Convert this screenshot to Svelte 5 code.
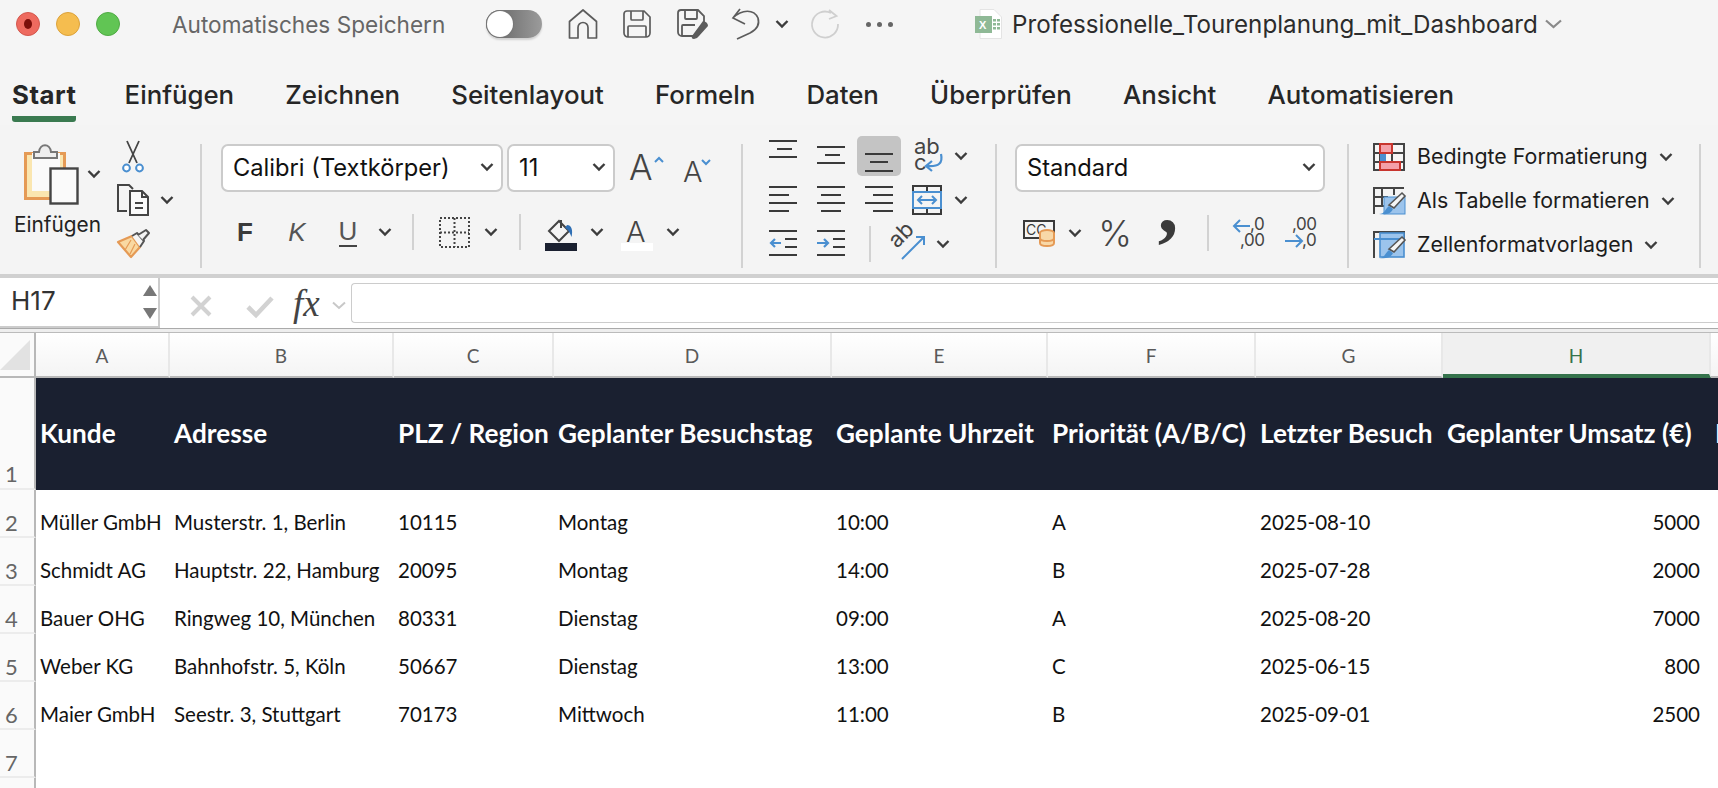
<script>
  const letters = ['A','B','C','D','E','F','G','H','I'];
  const head = ['Kunde','Adresse','PLZ / Region','Geplanter Besuchstag','Geplante Uhrzeit','Priorität (A/B/C)','Letzter Besuch','Geplanter Umsatz (€)','Route'];
  const rows = [
    ['Müller GmbH','Musterstr. 1, Berlin','10115','Montag','10:00','A','2025-08-10','5000'],
    ['Schmidt AG','Hauptstr. 22, Hamburg','20095','Montag','14:00','B','2025-07-28','2000'],
    ['Bauer OHG','Ringweg 10, München','80331','Dienstag','09:00','A','2025-08-20','7000'],
    ['Weber KG','Bahnhofstr. 5, Köln','50667','Dienstag','13:00','C','2025-06-15','800'],
    ['Maier GmbH','Seestr. 3, Stuttgart','70173','Mittwoch','11:00','B','2025-09-01','2500']
  ];
  const tabs = ['Einfügen','Zeichnen','Seitenlayout','Formeln','Daten','Überprüfen','Ansicht','Automatisieren'];
  const vTop = [[0,28,3],[8,23,11],[0,28,19]];
  const vMid = [[0,28,9],[8,23,17],[0,28,25]];
  const vBot = [[0,28,16],[5,23,24],[0,28,33]];
  const hLeft = [[0,28,5],[0,20,13],[0,28,21],[0,20,29]];
  const hCenter = [[0,28,5],[4,24,13],[0,28,21],[4,24,29]];
  const hRight = [[0,28,5],[8,28,13],[0,28,21],[8,28,29]];
</script>

{#snippet chev()}
  <svg class="chev" width="14" height="10" viewBox="0 0 14 10"><path d="M1.5 2 L7 7.5 L12.5 2" fill="none" stroke="#3c3c3c" stroke-width="2.4"/></svg>
{/snippet}

{#snippet lines(items)}
  <svg width="28" height="36" viewBox="0 0 28 36">
    {#each items as l}
      <line x1={l[0]} x2={l[1]} y1={l[2]} y2={l[2]} stroke="#3a3a3a" stroke-width="2"/>
    {/each}
  </svg>
{/snippet}

<div class="page">
  <header class="titlebar">
    <div class="lights">
      <span class="light red"><i></i></span>
      <span class="light yellow"></span>
      <span class="light green"></span>
    </div>
    <span class="autosave">Automatisches Speichern</span>
    <span class="toggle"><i></i></span>
    <svg class="qa home" width="30" height="30" viewBox="0 0 30 30"><path d="M1.5 29 V12.5 L15 1 L28.5 12.5 V29 H20 V18.5 a5 5 0 0 0 -10 0 V29 Z" fill="none" stroke="#5c5c5c" stroke-width="1.7" stroke-linejoin="round"/></svg>
    <svg class="qa save" width="28" height="28" viewBox="0 0 28 28"><path d="M4 1 H21 L27 7 V23 a4 4 0 0 1 -4 4 H5 a4 4 0 0 1 -4 -4 V4 a3 3 0 0 1 3 -3 Z M8 1 V9 a1 1 0 0 0 1 1 H19 a1 1 0 0 0 1 -1 V1 M5 27 V17 a1 1 0 0 1 1 -1 H22 a1 1 0 0 1 1 1 V27" fill="none" stroke="#5c5c5c" stroke-width="1.7"/></svg>
    <svg class="qa saveas" width="31" height="30" viewBox="0 0 31 30"><path d="M16 27 H5 a4 4 0 0 1 -4 -4 V4 a3 3 0 0 1 3 -3 H21 L27 7 V13 M8 1 V9 a1 1 0 0 0 1 1 H19 a1 1 0 0 0 1 -1 V1 M5 27 V17 a1 1 0 0 1 1 -1 H18" fill="none" stroke="#5c5c5c" stroke-width="1.8"/><path d="M15 27 Q14 30 17 30 Q20 30 22 27 L31 17 Q31 13 26 12 Z" fill="#5c5c5c"/></svg>
    <svg class="qa undo" width="28" height="32" viewBox="0 0 28 32"><path d="M8 1 L1 10 L13 16 M1 10 C10 1 22 1 26 10 C28 17 24 22 18 25 L5 31" fill="none" stroke="#5c5c5c" stroke-width="1.7"/></svg>
    <span class="qa-chev">{@render chev()}</span>
    <svg class="qa redo" width="28" height="28" viewBox="0 0 28 28"><path d="M20 3 A13 13 0 1 0 27 14 M18 0 L25.5 6 L18 9" fill="none" stroke="#cfcfcf" stroke-width="1.8"/></svg>
    <span class="dots"><i></i><i></i><i></i></span>
    <svg class="fileicon" width="27" height="30" viewBox="0 0 27 30"><path d="M5 0.5 H19 L26.5 8 V29.5 H5 Z" fill="#fff" stroke="#e4e4e4"/><rect x="0" y="7" width="17" height="17" fill="#8fb996"/><text x="4" y="20" class="xl">X</text><g fill="#8fb996"><rect x="18" y="10" width="3" height="2.5"/><rect x="22" y="10" width="3" height="2.5"/><rect x="18" y="14" width="3" height="2.5"/><rect x="22" y="14" width="3" height="2.5"/><rect x="18" y="18" width="3" height="2.5"/><rect x="22" y="18" width="3" height="2.5"/></g></svg>
    <span class="filename">Professionelle_Tourenplanung_mit_Dashboard</span>
    <svg class="filechev" width="17" height="10" viewBox="0 0 17 10"><path d="M1 1.5 L8.5 8 L16 1.5" fill="none" stroke="#8a8a8a" stroke-width="2.2"/></svg>
  </header>

  <nav class="tabs">
    <span class="tab active">Start</span>
    {#each tabs as t}<span class="tab">{t}</span>{/each}
  </nav>

  <section class="ribbon">
    <div class="g g1">
      <div class="paste">
        <div class="paste-top">
          <svg width="54" height="60" viewBox="0 0 54 60">
            <rect x="1.5" y="9.5" width="39" height="45" fill="#fae6b0" stroke="#e59a55" stroke-width="3"/>
            <rect x="8" y="9" width="28" height="38" fill="#fafafa"/>
            <path d="M10 14 V8 H15 C16 -1 26 -1 27 8 H33 V14 Z" fill="#eee" stroke="#777" stroke-width="2"/>
            <rect x="26.5" y="24.5" width="27" height="35" fill="#fafafa" stroke="#444" stroke-width="2.4"/>
          </svg>
          {@render chev()}
        </div>
        <span class="paste-label">Einfügen</span>
      </div>
      <div class="clip">
        <svg width="22" height="33" viewBox="0 0 22 33"><path d="M5 1 L15 23 M17 1 L7 23" fill="none" stroke="#444" stroke-width="1.8"/><circle cx="4.5" cy="28" r="3.4" fill="#fff" stroke="#4a8fd0" stroke-width="2"/><circle cx="17.5" cy="28" r="3.4" fill="#fff" stroke="#4a8fd0" stroke-width="2"/></svg>
        <span></span>
        <svg width="32" height="32" viewBox="0 0 32 32"><path d="M10 27 H1 V1 H12 L16 5" fill="none" stroke="#444" stroke-width="2"/><path d="M13 7 H25 L31 13 V31 H13 Z" fill="#fafafa" stroke="#444" stroke-width="2"/><path d="M25 7 V13 H31 M18 19 H26 M18 24 H26" fill="none" stroke="#444" stroke-width="2"/></svg>
        {@render chev()}
        <svg width="33" height="30" viewBox="0 0 33 30"><path d="M1 13 L15 7 L23 18 L14 28 Z" fill="#f9d9a2" stroke="#e59a55" stroke-width="2.2" stroke-linejoin="round"/><path d="M8 21 L14 11 M13 25 L18 15" stroke="#e59a55" stroke-width="1.2"/><path d="M15 7 L20 4 L27 12 L23 18" fill="#f5f5f5" stroke="#555" stroke-width="2" stroke-linejoin="round"/><path d="M21 6 L29 1 L32 4 L26 11" fill="#f5f5f5" stroke="#555" stroke-width="2" stroke-linejoin="round"/></svg>
        <span></span>
      </div>
    </div>
    <div class="sep"></div>

    <div class="g g2">
      <div class="g2top">
        <div class="sel fontsel"><span>Calibri (Textkörper)</span>{@render chev()}</div>
        <div class="sel sizesel"><span>11</span>{@render chev()}</div>
        <svg class="grow" width="38" height="30" viewBox="0 0 38 30"><text x="0" y="27" class="bigA">A</text><path d="M26 9 L30 5 L34 9" fill="none" stroke="#4a8fd0" stroke-width="2"/></svg>
        <svg class="shrink" width="34" height="26" viewBox="0 0 34 26"><text x="0" y="24" class="midA">A</text><path d="M19 3 L23 7 L27 3" fill="none" stroke="#4a8fd0" stroke-width="2" transform="translate(0,-1)"/></svg>
      </div>
      <div class="g2bot">
        <b class="fmt">F</b>
        <i class="fmt">K</i>
        <span class="fmt under">U</span>
        {@render chev()}
        <span class="vr"></span>
        <svg width="31" height="31" viewBox="0 0 31 31"><rect x="1" y="1" width="29" height="29" fill="none" stroke="#444" stroke-width="2" stroke-dasharray="2 2"/><path d="M15.5 1 V30 M1 15.5 H30" stroke="#444" stroke-width="2" stroke-dasharray="2 2"/></svg>
        {@render chev()}
        <span class="vr"></span>
        <span class="colorbtn">
          <svg width="26" height="24" viewBox="0 0 26 24"><path d="M2 13 L12 3 L22 13 L12 23 Z" fill="none" stroke="#444" stroke-width="2" transform="translate(-1,-1)"/><path d="M13 1 V9" stroke="#444" stroke-width="2"/><path d="M19 6 C24 6 25 12 23.5 18 C22 14 20 10 17 9 Z" fill="#2f6fb4"/></svg>
          <i class="bar dark"></i>
        </span>
        {@render chev()}
        <span class="colorbtn">
          <svg width="26" height="24" viewBox="0 0 26 24"><text x="2" y="23" class="fontA">A</text></svg>
          <i class="bar white"></i>
        </span>
        {@render chev()}
      </div>
    </div>
    <div class="sep"></div>

    <div class="g g3">
      <div class="g3row">
        <span class="cell">{@render lines(vTop)}</span>
        <span class="cell">{@render lines(vMid)}</span>
        <span class="cell pressed">{@render lines(vBot)}</span>
        <svg class="wrap" width="30" height="32" viewBox="0 0 30 32"><text x="0" y="14" class="ab">ab</text><text x="0" y="30" class="ab">c</text><path d="M27 14 C29 23 25 27 13 26 M18 21 L12 26 L18 31" fill="none" stroke="#4a8fd0" stroke-width="2.2"/></svg>
        {@render chev()}
      </div>
      <div class="g3row">
        <span class="cell">{@render lines(hLeft)}</span>
        <span class="cell">{@render lines(hCenter)}</span>
        <span class="cell">{@render lines(hRight)}</span>
        <svg width="30" height="30" viewBox="0 0 30 30"><path d="M1 1 H29 V29 H1 Z M1 7 H29 M1 23 H29 M15 1 V7 M15 23 V29" fill="none" stroke="#3a3a3a" stroke-width="2"/><rect x="1" y="7" width="28" height="16" fill="#f4f4f4" stroke="#4a8fd0" stroke-width="2"/><path d="M6 15 H24 M10 11 L6 15 L10 19 M20 11 L24 15 L20 19" fill="none" stroke="#4a8fd0" stroke-width="2"/></svg>
        {@render chev()}
      </div>
      <div class="g3row last">
        <span class="cell">
          <svg width="28" height="36" viewBox="0 0 28 36"><path d="M0 5 H28 M16 13 H28 M16 21 H28 M0 29 H28" stroke="#3a3a3a" stroke-width="2"/><path d="M12 17 H2 M6 13 L2 17 L6 21" fill="none" stroke="#4a8fd0" stroke-width="2.2"/></svg>
        </span>
        <span class="cell">
          <svg width="28" height="36" viewBox="0 0 28 36"><path d="M0 5 H28 M16 13 H28 M16 21 H28 M0 29 H28" stroke="#3a3a3a" stroke-width="2"/><path d="M0 17 H11 M7 13 L11 17 L7 21" fill="none" stroke="#4a8fd0" stroke-width="2.2"/></svg>
        </span>
        <span class="vr"></span>
        <svg width="34" height="32" viewBox="0 0 34 32"><text x="0" y="0" class="ab" transform="translate(5,21) rotate(-45)">ab</text><path d="M10 31 L32 9 M24 9 H32 V17" fill="none" stroke="#4a8fd0" stroke-width="2"/></svg>
        {@render chev()}
      </div>
    </div>
    <div class="sep"></div>

    <div class="g g4">
      <div class="sel numsel"><span>Standard</span>{@render chev()}</div>
      <div class="g4bot">
        <svg width="33" height="27" viewBox="0 0 33 27"><rect x="1" y="1" width="30" height="17" fill="none" stroke="#3a3a3a" stroke-width="2"/><text x="3" y="15" class="cc">CC</text><ellipse cx="24" cy="13" rx="7" ry="3" fill="#f8d8a8" stroke="#e59a55" stroke-width="2"/><path d="M17 13 V23 C17 27 31 27 31 23 V13 M17 18 C17 22 31 22 31 18" fill="#f8d8a8" stroke="#e59a55" stroke-width="2"/></svg>
        {@render chev()}
        <span class="pct">%</span>
        <span class="comma">,</span>
        <span class="vr"></span>
        <svg width="32" height="32" viewBox="0 0 32 32"><text x="18" y="13" class="dec">,0</text><text x="8" y="29" class="dec">,00</text><path d="M18 9 H2 M8 3 L2 9 L8 15" fill="none" stroke="#4a8fd0" stroke-width="2"/></svg>
        <svg width="32" height="32" viewBox="0 0 32 32"><text x="8" y="13" class="dec">,00</text><text x="18" y="29" class="dec">,0</text><path d="M1 24 H18 M12 18 L18 24 L12 30" fill="none" stroke="#4a8fd0" stroke-width="2"/></svg>
      </div>
    </div>
    <div class="sep"></div>

    <div class="g g5">
      <div class="style-row">
        <svg width="32" height="28" viewBox="0 0 32 28"><path d="M1 1 H31 V27 H1 Z M1 10 H31 M1 19 H31 M7 1 V27 M19 1 V27" fill="#f6f6f6" stroke="#444" stroke-width="2"/><rect x="7" y="10" width="6" height="9" fill="#4a8fd0"/><rect x="7" y="1" width="12" height="9" fill="#f4a0a8" stroke="#c8352e" stroke-width="2"/><rect x="7" y="19" width="20" height="8" fill="#f4a0a8" stroke="#c8352e" stroke-width="2"/></svg>
        <span>Bedingte Formatierung</span>{@render chev()}
      </div>
      <div class="style-row">
        <svg width="32" height="28" viewBox="0 0 32 28"><path d="M1 27 V1 H31 M1 10 H15 M1 19 H12 M9 1 V20 M21 1 V8" fill="none" stroke="#444" stroke-width="2"/><rect x="11" y="10" width="21" height="17" fill="#9cc4ec" stroke="#4a8fd0" stroke-width="1"/><path d="M16 18 L29 6 L32 9 L21 21 Z" fill="#f5f5f5" stroke="#555" stroke-width="1.6"/><path d="M6 27 C12 27 12 22 16 19 L20 22 C18 27 12 28 6 27 Z" fill="#4a8fd0"/></svg>
        <span>Als Tabelle formatieren</span>{@render chev()}
      </div>
      <div class="style-row">
        <svg width="32" height="28" viewBox="0 0 32 28"><path d="M1 27 V1 H31 V8 M1 8 H31" fill="none" stroke="#444" stroke-width="2"/><rect x="7" y="2" width="24" height="24" fill="#9cc4ec" stroke="#4a8fd0" stroke-width="1.6"/><path d="M1 8 H31" stroke="#4a8fd0" stroke-width="2"/><path d="M16 18 L29 6 L32 9 L21 21 Z" fill="#f5f5f5" stroke="#555" stroke-width="1.6"/><path d="M6 27 C12 27 12 22 16 19 L20 22 C18 27 12 28 6 27 Z" fill="#4a8fd0"/></svg>
        <span>Zellenformatvorlagen</span>{@render chev()}
      </div>
    </div>
    <div class="sep"></div>
  </section>

  <div class="fbar">
    <div class="namebox">
      <span>H17</span>
      <div class="spin"><i class="up"></i><i class="down"></i></div>
    </div>
    <svg class="fx-x" width="22" height="22" viewBox="0 0 22 22"><path d="M2 2 L20 20 M20 2 L2 20" stroke="#d2d2d2" stroke-width="4"/></svg>
    <svg class="fx-c" width="28" height="22" viewBox="0 0 28 22"><path d="M2 12 L10 20 L26 3" fill="none" stroke="#d2d2d2" stroke-width="4.6"/></svg>
    <span class="fx">fx</span>
    <svg class="fx-chev" width="14" height="9" viewBox="0 0 14 9"><path d="M1 1.5 L7 7 L13 1.5" fill="none" stroke="#c8c8c8" stroke-width="2"/></svg>
    <div class="finput"></div>
  </div>
  <div class="double"></div>

  <div class="sheet">
    <div class="corner"><i></i></div>
    {#each letters as l}
      <div class="colh" class:selected={l === 'H'}>{l}</div>
    {/each}

    <div class="rowh first">1</div>
    {#each head as h}
      <div class="hcell"><span>{h}</span></div>
    {/each}

    {#each rows as r, i}
      <div class="rowh">{i + 2}</div>
      {#each r as c, j}
        <div class="cell-d" class:num={j === 7}>{c}</div>
      {/each}
      <div class="cell-d"></div>
    {/each}

    <div class="rowh">7</div>
    {#each letters as _}<div class="cell-d"></div>{/each}
    <div class="rowh"></div>
    {#each letters as _}<div class="cell-d"></div>{/each}
  </div>
</div>

<style>
  :global(body) { margin: 0; overflow: hidden; background: #fff; }
  svg { overflow: visible; flex: none; }
  .page { width: 1718px; height: 788px; overflow: hidden; background: #f5f5f5; font-family: Inter, "Liberation Sans", sans-serif; color: #222; }

  .titlebar { height: 50px; padding-bottom: 2px; box-sizing: border-box; display: flex; align-items: center; }
  .lights { display: flex; gap: 16px; padding-left: 16px; }
  .light { width: 24px; height: 24px; border-radius: 50%; display: flex; align-items: center; justify-content: center; box-sizing: border-box; }
  .red { background: #ee6a5f; border: 1px solid #d3574d; }
  .red i { width: 8px; height: 10px; border-radius: 50%; background: #7c0f0a; }
  .yellow { background: #f5bd4f; border: 1px solid #dca23a; }
  .green { background: #61c554; border: 1px solid #50ab44; }
  .autosave { margin-left: 52px; font-size: 22.6px; color: #666; width: 314px; white-space: nowrap; flex: none; }
  .toggle { width: 56px; height: 28px; border-radius: 14px; background: linear-gradient(90deg, #5f5f5f, #9b9b9b); display: flex; align-items: center; box-shadow: 0 2px 2px rgba(0,0,0,.15); flex: none; }
  .toggle i { width: 26px; height: 26px; margin-left: 1px; border-radius: 50%; background: #fff; box-shadow: 0 0 0 1px #777; }
  .home { margin-left: 26px; }
  .save { margin-left: 25px; }
  .saveas { margin-left: 26px; }
  .undo { margin-left: 24px; }
  .qa-chev { margin-left: 15px; display: flex; }
  .redo { margin-left: 22px; }
  .dots { margin-left: 27px; display: flex; gap: 6px; }
  .dots i { width: 5px; height: 5px; border-radius: 50%; background: #666; }
  .fileicon { margin-left: 82px; }
  .filename { margin-left: 10px; font-size: 24.2px; color: #2c2c2c; white-space: nowrap; }
  .filechev { margin-left: 7px; }
  .xl { font: 700 11px "Liberation Sans", sans-serif; fill: #fff; }

  .tabs { height: 75px; display: flex; gap: 51.2px; padding-left: 12px; box-sizing: border-box; padding-top: 27px; font-size: 25.8px; font-weight: 500; color: #262626; }
  .tab { height: 39px; line-height: 36px; white-space: nowrap; }
  .tab.active { font-weight: 700; border-bottom: 6px solid #3a7a50; border-radius: 0 0 3px 3px; letter-spacing: 0.5px; margin-right: -3px; }

  .ribbon { height: 149px; display: flex; align-items: flex-start; background: #f4f4f4; box-sizing: border-box; }
  .sep { width: 2px; height: 124px; margin-top: 19px; background: #d2d2d2; flex: none; }
  .g { flex: none; box-sizing: border-box; }
  .vr { width: 2px; height: 36px; background: #d2d2d2; justify-self: center; }

  .g1 { width: 200px; display: flex; }
  .paste { width: 108px; padding-top: 19px; box-sizing: border-box; }
  .paste-top { display: flex; align-items: center; padding-left: 24px; gap: 9px; }
  .paste-label { display: block; margin: 9px 0 0 14px; font-size: 20.8px; line-height: 24px; color: #222; white-space: nowrap; }
  .clip { display: grid; grid-template-columns: 50px 18px; grid-auto-rows: 44px; margin-top: 9px; align-items: center; justify-items: center; }

  .g2 { width: 539px; padding-top: 19px; }
  .g2top { display: flex; padding-left: 19px; gap: 4px; align-items: center; }
  .sel { height: 48px; background: #fff; border: 2px solid #cbcbcb; border-radius: 7px; box-sizing: border-box; display: flex; align-items: center; justify-content: space-between; padding: 0 7px 2px 10px; font-size: 23.7px; color: #111; white-space: nowrap; flex: none; }
  .fontsel { width: 282px; }
  .sizesel { width: 108px; }
  .grow { margin-left: 10px; }
  .shrink { margin-left: 12px; margin-top: 6px; }
  .bigA { font: 300 35px Inter, sans-serif; fill: #444; }
  .midA { font: 300 29px Inter, sans-serif; fill: #444; }
  .g2bot { display: grid; grid-template-columns: 52px 52px 50px 24px 32px 50px 24px 34px 48px 24px 56px 16px; height: 40px; margin: 20px 0 0 17px; align-items: center; justify-items: center; }
  .fmt { font-size: 26px; line-height: 30px; color: #444; font-family: "Liberation Sans", sans-serif; font-style: normal; font-weight: 400; }
  b.fmt { font-weight: 700; color: #3a3a3a; }
  i.fmt { font-style: italic; color: #555; }
  .under { border-bottom: 2px solid #444; line-height: 27px; color: #555; }
  .colorbtn { display: flex; flex-direction: column; align-items: center; width: 32px; margin-top: 6px; }
  .bar { display: block; width: 32px; height: 8px; }
  .bar.dark { background: #1a2030; }
  .bar.white { background: #fff; }
  .fontA { font: 300 29px Inter, sans-serif; fill: #444; }

  .g3 { width: 252px; padding: 2px 0 0 16px; }
  .g3row { display: grid; grid-template-columns: 48px 48px 48px 48px 20px; height: 44px; align-items: center; justify-items: center; }
  .g3row:first-child { margin-top: 7px; }
  .g3row.last { grid-template-columns: 48px 48px 30px 48px 20px; }
  .cell { width: 44px; height: 40px; display: flex; align-items: center; justify-content: center; border-radius: 5px; }
  .pressed { background: #c4c4c4; }
  .wrap { margin-left: 4px; }
  .ab { font: 400 22px Inter, sans-serif; fill: #444; }

  .g4 { width: 350px; padding: 19px 0 0 18px; }
  .numsel { width: 310px; }
  .g4bot { display: grid; grid-template-columns: 48px 24px 56px 50px 30px 50px 54px; width: 312px; height: 40px; margin-top: 21px; align-items: center; justify-items: center; }
  .cc { font: 400 14px Inter, sans-serif; fill: #3a3a3a; }
  .pct { font-size: 36px; font-weight: 300; color: #444; line-height: 40px; }
  .comma { font: 700 82px/40px "Liberation Serif", serif; color: #3a3a3a; margin-top: -56px; }
  .dec { font: 400 17px Inter, sans-serif; fill: #444; letter-spacing: -0.5px; }

  .g5 { width: 350px; padding: 10px 0 0 24px; }
  .style-row { height: 44px; display: flex; align-items: center; font-size: 21.4px; color: #1c1c1c; white-space: nowrap; }
  .style-row span { padding-bottom: 2px; }
  .style-row svg:first-child { margin-right: 12px; }
  .style-row .chev { margin-left: 11px; }

  .fbar { border-top: 4px solid #d0d0d0; height: 50px; background: #fff; display: flex; align-items: center; }
  .namebox { height: 48px; width: 147px; border-right: 2px solid #ccc; border-bottom: 2px solid #ccc; display: flex; align-items: center; justify-content: space-between; padding-left: 11px; align-self: flex-start; font-size: 26px; color: #333; flex: none; }
  .namebox span { padding-bottom: 4px; }
  .spin { display: flex; flex-direction: column; gap: 12px; margin-right: 1px; }
  .spin i { width: 0; height: 0; border-left: 7px solid transparent; border-right: 7px solid transparent; }
  .spin .up { border-bottom: 11px solid #777; }
  .spin .down { border-top: 11px solid #777; }
  .fx-x { margin-left: 30px; margin-top: 6px; }
  .fx-c { margin-left: 34px; margin-top: 6px; }
  .fx { margin-left: 19px; font: italic 37px "Liberation Serif", serif; color: #444; margin-top: 0; width: 30px; }
  .fx-chev { margin-left: 9px; margin-top: 4px; }
  .finput { flex: 1; height: 40px; margin-left: 5px; border: 1px solid #ccc; border-right: 0; border-radius: 4px 0 0 4px; background: #fff; box-sizing: border-box; }
  .double { height: 3px; border-top: 1px solid #aaa; border-bottom: 1px solid #bbb; background: #eee; }

  .sheet { display: grid; grid-template-columns: 36px 134px 224px 160px 278px 216px 208px 187px 268px 200px; grid-template-rows: 45px 112px repeat(7, 48px); background: #fff; font-family: Lato, sans-serif; color: #111; }
  .corner { background: #fafafa; border-right: 2px solid #b8b8b8; border-bottom: 2px solid #b8b8b8; box-sizing: border-box; display: flex; align-items: center; }
  .corner i { width: 0; height: 0; border-bottom: 30px solid #e2e2e2; border-left: 30px solid transparent; }
  .colh { background: linear-gradient(#fff, #f4f4f4); border-right: 2px solid #e8e8e8; border-bottom: 2px solid #b8b8b8; box-sizing: border-box; text-align: center; font-size: 19px; line-height: 46px; color: #5a5a5a; }
  .colh.selected { background: #f0f0f0; color: #35734c; border-bottom: 4px solid #35734c; }
  .rowh { background: #fafafa; border-right: 2px solid #b8b8b8; border-bottom: 2px solid #ececec; box-sizing: border-box; text-align: center; font-size: 22px; line-height: 66px; color: #666; padding-right: 11px; height: 48px; overflow: hidden; }
  .rowh.first { line-height: 192px; height: 112px; }
  .hcell { background: #1a2030; color: #fff; font-weight: 700; font-size: 26.2px; display: flex; align-items: center; padding: 0 0 2px 4px; white-space: nowrap; overflow: hidden; }
  .cell-d { font-size: 20.5px; line-height: 65px; padding-left: 4px; white-space: nowrap; overflow: hidden; height: 48px; }
  .cell-d.num { text-align: right; padding: 0 11px 0 0; }
</style>
